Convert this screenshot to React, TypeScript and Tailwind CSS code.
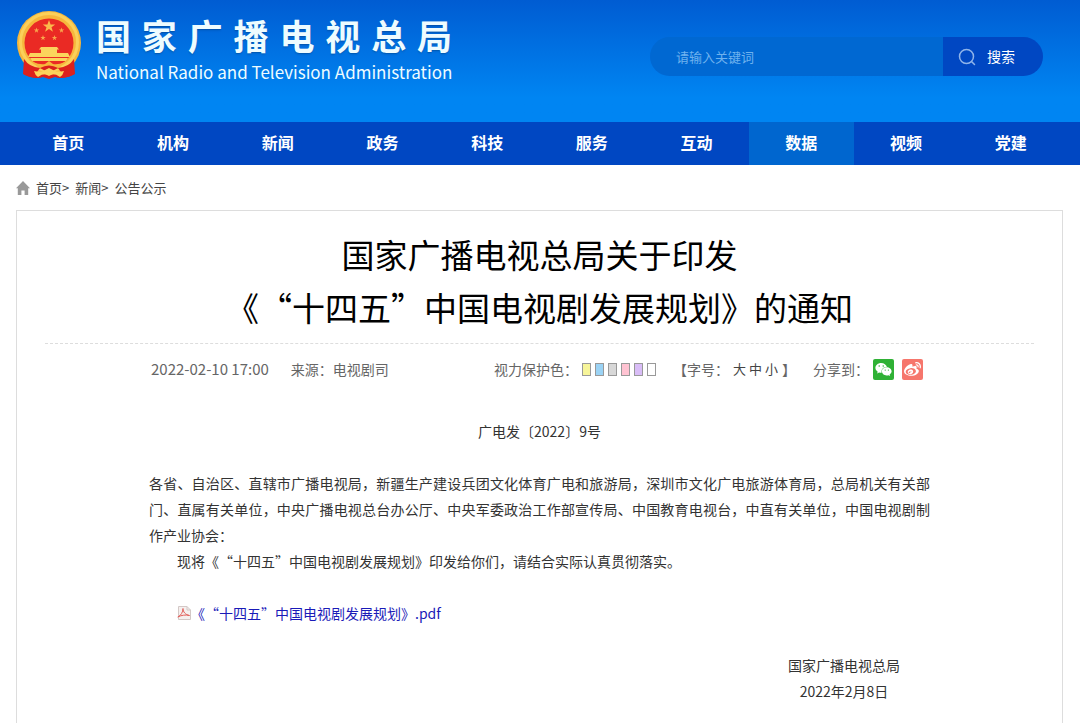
import React, { useState } from "react";
import { FaWeibo, FaWeixin } from "react-icons/fa";

const navItems = [
  "首页",
  "机构",
  "新闻",
  "政务",
  "科技",
  "服务",
  "互动",
  "数据",
  "视频",
  "党建",
];

const eyeColors = [
  { name: "黄色", className: "bg-[#f7f59a]" },
  { name: "蓝色", className: "bg-[#9bd3f5]" },
  { name: "灰色", className: "bg-[#d8d8d8]" },
  { name: "粉色", className: "bg-[#ffc3d2]" },
  { name: "紫色", className: "bg-[#d9bdf7]" },
  { name: "白色", className: "bg-white" },
];

const Emblem: React.FC = () => (
  <svg viewBox="0 0 66 70" className="h-[70px] w-[66px] shrink-0" aria-hidden="true">
    <path d="M10 46L8 64Q18 70 27 67L33 69L39 67Q48 70 58 64L56 46Z" fill="#d9201c" />
    <circle cx="33" cy="33" r="32" fill="#f6b73c" />
    <circle cx="33" cy="32" r="28.500" fill="none" stroke="#fbd05a" strokeWidth="3" />
    <circle cx="33" cy="33" r="24.500" fill="#ea2a24" />
    <path
      d="M33 10l1.600 4.400h4.600l-3.700 2.800 1.400 4.500-3.900-2.700-3.900 2.700 1.400-4.500-3.700-2.800h4.600z"
      fill="#fbb94c"
    />
    <g fill="#f9a74c">
      <path id="star" d="M20.500 17.500l.7 2h2l-1.700 1.200.7 2-1.700-1.200-1.700 1.200.7-2-1.700-1.200h2z" />
      <use href="#star" x="25" />
      <use href="#star" x="6.500" y="7.500" />
      <use href="#star" x="18" y="7.500" />
    </g>
    <path
      d="M25 37h16l2 2.500h-2v3.500h11l2 4H12l2-4h11v-3.500h-2zM14 48h38l-2 3H16z"
      fill="#fbd45c"
    />
    <path d="M17 52q7 3 12 2l4-3 4 3q5 1 12-2l-7 7H24z" fill="#f6b73c" />
    <path
      d="M8 49Q13 57 24 58L21 62 26 67Q15 69 7 64zM58 49Q53 57 42 58L45 62 40 67Q51 69 59 64z"
      fill="#dc211d"
    />
    <path d="M24 58q9-5 18 0l-9 5z" fill="#d9201c" />
    <path d="M18 61q6 1 9 0l6-3 6 3q3 1 9 0-1 4-4 6-4-3-7-3l-4 2-4-2q-3 0-7 3-3-2-4-6z" fill="#fbd45c" />
  </svg>
);

const SearchIcon: React.FC = () => (
  <svg
    viewBox="0 0 18 18"
    className="h-[18px] w-[18px]"
    fill="none"
    stroke="#8fb4ea"
    strokeWidth="1.500"
    strokeLinecap="round"
    aria-hidden="true"
  >
    <circle cx="8.500" cy="8.500" r="7" />
    <path d="M13.500 13.500l3 3" />
  </svg>
);

const HomeIcon: React.FC = () => (
  <svg viewBox="0 0 14 14" className="h-[14px] w-[14px]" fill="#999999" aria-hidden="true">
    <path d="M7 0L14 7.200h-1.800V14H8.600V9.500H5.400V14H1.800V7.200H0z" />
  </svg>
);

const PdfIcon: React.FC = () => (
  <svg viewBox="0 0 14 14" className="h-[14px] w-[14px]" fill="none" aria-hidden="true">
    <path d="M1.500.5h8.500l3.500 3.500v9.500h-12z" fill="#f5f0ef" stroke="#d3c8c6" />
    <path d="M10 .5v3.500h3.500" stroke="#d3c8c6" />
    <path
      d="M.8 11C4 9.500 6 6 6 2.500 6 6 8.500 8.800 12.500 9.500 9 8.600 4.500 9 .8 11z"
      stroke="#e2605b"
      strokeLinejoin="round"
    />
  </svg>
);

const Header: React.FC = () => {
  const [keyword, setKeyword] = useState("");

  return (
    <header>
      <div className="flex h-[122px] items-start justify-between bg-linear-to-b from-[#005cd2] to-[#0085f2] to-80% pl-4">
        <div className="flex items-start gap-[14px] pt-[10px]">
          <Emblem />
          <div className="w-[356px] text-[#eefcff]">
            <h1 className="text-[35px] leading-[50px] font-bold [text-align-last:justify] text-shadow-sm">
              国家广播电视总局
            </h1>
            <p className="text-[17px] leading-[24px] whitespace-nowrap">
              National Radio and Television Administration
            </p>
          </div>
        </div>

        <form
          className="mt-[37px] mr-[37px] flex h-[39px] overflow-hidden rounded-full"
          onSubmit={(e) => e.preventDefault()}
        >
          <input
            type="text"
            aria-label="请输入关键词"
            placeholder="请输入关键词"
            value={keyword}
            onChange={(e) => setKeyword(e.target.value)}
            className="w-[293px] bg-[#0068d2] pl-[26px] text-[13px] text-white outline-none placeholder:text-[#6fb2ee]"
          />
          <button
            type="submit"
            className="flex w-[100px] items-center gap-[11px] bg-[#0047c2] pl-[15px] text-[14px] text-white"
          >
            <SearchIcon />
            搜索
          </button>
        </form>
      </div>

      <nav className="grid h-[43px] grid-cols-10 bg-[#0047c2] pr-[17px] pl-4">
        {navItems.map((item) => (
          <a
            key={item}
            href="#"
            className={
              item === "数据"
                ? "bg-[#0066cf] text-center text-[16px] leading-[41px] font-bold text-white"
                : "text-center text-[16px] leading-[41px] font-bold text-white"
            }
          >
            {item}
          </a>
        ))}
      </nav>
    </header>
  );
};

const MetaBar: React.FC = () => (
  <div className="flex h-[50px] items-center justify-between pr-[111px] pl-[106px] text-[14px] text-[#666666]">
    <div className="flex items-center gap-[22px]">
      <time className="text-[15px]">2022-02-10 17:00</time>
      <span>来源：电视剧司</span>
    </div>

    <div className="flex items-center">
      <span>视力保护色：</span>
      <div className="mr-[17px] ml-1 flex gap-1">
        {eyeColors.map((color) => (
          <button
            key={color.name}
            type="button"
            aria-label={color.name}
            className={`h-[13px] w-[9px] border border-[#999999] ${color.className}`}
          />
        ))}
      </div>
      <span>【字号：</span>
      <div className="mx-1 flex gap-[3px] text-[13px] text-[#444444]">
        <button type="button">大</button>
        <button type="button">中</button>
        <button type="button">小</button>
      </div>
      <span>】</span>
      <span className="ml-[17px]">分享到：</span>
      <div className="ml-1 flex gap-2 text-white">
        <a
          href="#"
          aria-label="微信"
          className="flex h-[21px] w-[21px] items-center justify-center rounded-xs bg-[#2fb135]"
        >
          <FaWeixin size={17} />
        </a>
        <a
          href="#"
          aria-label="微博"
          className="flex h-[21px] w-[21px] items-center justify-center rounded-xs bg-[#f6766c]"
        >
          <FaWeibo size={17} />
        </a>
      </div>
    </div>
  </div>
);

const App: React.FC = () => {
  return (
    <div
      className="min-h-screen bg-white font-['Noto_Sans_CJK_SC',sans-serif] [text-spacing-trim:space-all]"
      lang="zh-CN"
    >
      <Header />

      <div className="flex h-[45px] items-center gap-[6px] px-4 text-[13px] text-[#444444]">
        <HomeIcon />
        <div className="flex gap-[6px]">
          <span>
            <a href="#">首页</a>&gt;
          </span>
          <span>
            <a href="#">新闻</a>&gt;
          </span>
          <a href="#">公告公示</a>
        </div>
      </div>

      <main className="mr-[17px] ml-4 border border-b-0 border-[#dddddd] px-7 pt-[17px]">
        <h2 className="border-b border-dashed border-[#dddddd] pb-[9px] text-center text-[33px] leading-[53px] text-black">
          国家广播电视总局关于印发
          <br />
          《“十四五”中国电视剧发展规划》的通知
        </h2>

        <MetaBar />

        <article className="px-[104px] pt-[24px] pb-8 text-[14px] leading-[26px] text-[#333333]">
          <p className="text-center">广电发〔2022〕9号</p>
          <p className="mt-[26px] text-justify">
            各省、自治区、直辖市广播电视局，新疆生产建设兵团文化体育广电和旅游局，深圳市文化广电旅游体育局，总局机关有关部门、直属有关单位，中央广播电视总台办公厅、中央军委政治工作部宣传局、中国教育电视台，中直有关单位，中国电视剧制作产业协会：
          </p>
          <p className="indent-[28px]">
            现将《“十四五”中国电视剧发展规划》印发给你们，请结合实际认真贯彻落实。
          </p>
          <p className="mt-[26px] flex items-center pl-7">
            <PdfIcon />
            <a href="#" className="text-[#1a1ab8]">
              《“十四五”中国电视剧发展规划》.pdf
            </a>
          </p>
          <div className="mt-[26px] flex justify-end pr-[30px]">
            <p className="text-center">
              国家广播电视总局
              <br />
              2022年2月8日
            </p>
          </div>
        </article>
      </main>
    </div>
  );
};

export default App;
